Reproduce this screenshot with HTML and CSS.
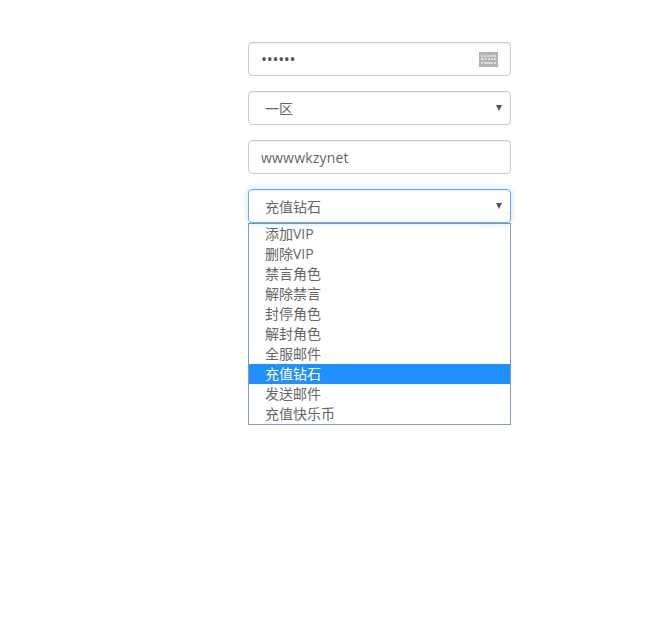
FILE: index.html
```html
<!DOCTYPE html>
<html lang="zh-CN">
<head>
    <meta charset="UTF-8">
    <meta name="viewport" content="width=device-width, initial-scale=1.0">
    <title>GM</title>
    <link rel="stylesheet" href="styles.css">
</head>
<body>
    <form class="panel">
        <div class="field field-password">
            <span class="dots">••••••</span>
            <svg class="kbd" width="19" height="15" viewBox="0 0 19 15">
                <rect width="19" height="15" fill="#b4b4b4"/>
                <path d="M2 3h2v2H2zM5 3h2v2H5zM8 3h2v2H8zM11 3h2v2h-2zM14 3h3v2h-3zM2 6h3v2H2zM6 6h2v2H6zM9 6h2v2H9zM12 6h2v2h-2zM15 6h2v2h-2zM2 10h2v2H2zM5 10h9v2H5zM15 10h2v2h-2z" fill="#dcdcdc"/>
            </svg>
        </div>
        <div class="field field-select">
            <span>一区</span>
            <span class="arrow"></span>
        </div>
        <div class="field field-text">wwwwkzynet</div>
        <div class="dropdown">
            <div class="field field-select field-focus">
                <span>充值钻石</span>
                <span class="arrow"></span>
            </div>
            <ul class="options">
                <li>添加VIP</li>
                <li>删除VIP</li>
                <li>禁言角色</li>
                <li>解除禁言</li>
                <li>封停角色</li>
                <li>解封角色</li>
                <li>全服邮件</li>
                <li class="selected">充值钻石</li>
                <li>发送邮件</li>
                <li>充值快乐币</li>
            </ul>
        </div>
    </form>
</body>
</html>
```
FILE: styles.css
```css
body {
    margin: 0;
    font-family: "Open Sans", "Noto Sans CJK SC", sans-serif;
    font-size: 14px;
    color: #666;
    background: #fff;
}
.panel {
    width: 263px;
    margin: 42px 0 0 248px;
    display: flex;
    flex-direction: column;
    gap: 15px;
}
.field {
    height: 34px;
    box-sizing: border-box;
    border: 1px solid #ccc;
    border-radius: 4px;
    display: flex;
    align-items: center;
    justify-content: space-between;
    padding: 0 12px;
    box-shadow: inset 0 1px 1px rgba(0, 0, 0, .075);
}
.dots {
    font-size: 16px;
    letter-spacing: -.3px;
    color: #555;
}
.kbd {
    display: block;
}
.field-select {
    padding: 0 8px 0 16px;
}
.field-text {
    letter-spacing: .2px;
}
.field-focus {
    border-color: #66afe9;
    box-shadow: inset 0 1px 1px rgba(0, 0, 0, .075), 0 0 6px rgba(102, 175, 233, .45);
}
.arrow {
    width: 0;
    height: 0;
    border-left: 3.5px solid transparent;
    border-right: 3.5px solid transparent;
    border-top: 6px solid #555;
    margin-top: -1px;
}
.options {
    list-style: none;
    margin: 0;
    padding: 0;
    border: 1px solid #7f9db9;
    border-top-color: #6f94c4;
}
.options li {
    height: 20px;
    line-height: 20px;
    padding-left: 16px;
}
.options .selected {
    background: #1e90ff;
    color: #fff;
}
```
